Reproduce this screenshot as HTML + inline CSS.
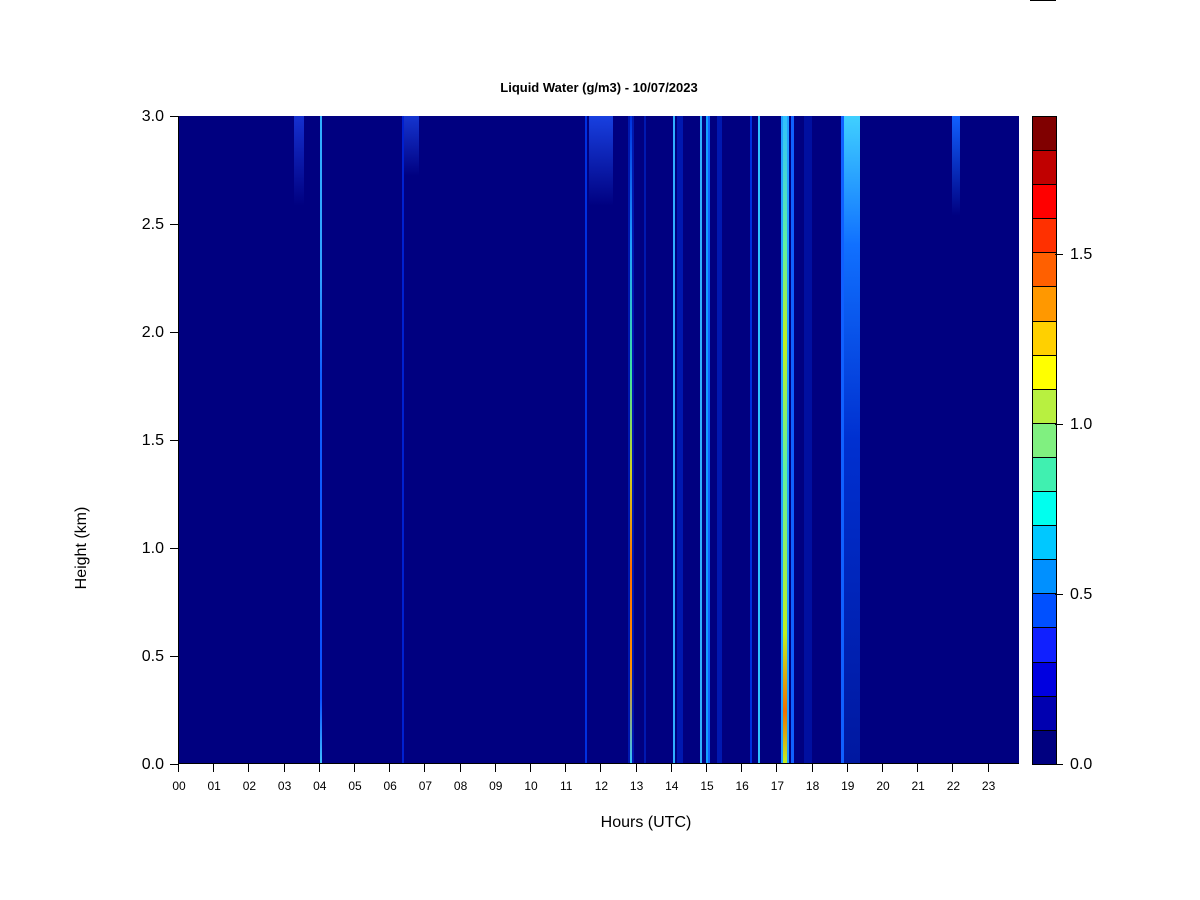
<!DOCTYPE html>
<html><head><meta charset="utf-8"><style>
body{margin:0;width:1200px;height:900px;background:#fff;position:relative;overflow:hidden;font-family:"Liberation Sans",Arial,sans-serif}
.a{position:absolute}
#plot{left:178px;top:116px;width:841px;height:648px;background:#000080;overflow:hidden;border-left:1px solid #000;border-bottom:1px solid #000;box-sizing:border-box}
.s{position:absolute;top:0;height:100%}
.yl{position:absolute;font-size:16px;right:1036px;width:60px;text-align:right}
.xt{position:absolute;top:764px;width:1px;height:8px;background:#000}
.xl{position:absolute;top:779px;font-size:12px;width:30px;text-align:center}
.yt{position:absolute;left:170px;width:8px;height:1px;background:#000}
.cb div{height:34.1px;border-top:1px solid #000;box-sizing:border-box}
.cl{position:absolute;left:1070px;font-size:16px}
.ct{position:absolute;left:1055px;width:8px;height:1px;background:#000}
</style></head><body>
<div class="a" style="left:1030px;top:0;width:26px;height:1px;background:#000"></div>
<div class="a" style="left:0;width:1198px;top:80px;text-align:center;font-size:13px;font-weight:bold">Liquid Water (g/m3) - 10/07/2023</div>
<div id="plot" class="a">
<div class="s" style="left:115px;width:10px;height:90px;background:linear-gradient(#1530d0,#000080)"></div>
<div class="s" style="left:141px;width:2px;background:linear-gradient(#30b0ff,#30a0ff 25%,#1060ff 40%,#0a50ff 90%,#40c0ff)"></div>
<div class="s" style="left:223px;width:2px;background:#0020d0"></div>
<div class="s" style="left:225px;width:15px;height:60px;background:linear-gradient(#1535d0,#000080)"></div>
<div class="s" style="left:406px;width:2px;background:#0030e0"></div>
<div class="s" style="left:410px;width:24px;height:90px;background:linear-gradient(#1840e0,#000080)"></div>
<div class="s" style="left:449px;width:6px;background:#0018b0"></div>
<div class="s" style="left:451px;width:2px;background:linear-gradient(#0030e0,#20a0ff 20%,#40e0a0 40%,#d0d020 55%,#ff7000 70%,#ff9000 85%,#30c0ff)"></div>
<div class="s" style="left:465px;width:2px;background:#0018b0"></div>
<div class="s" style="left:494px;width:2px;background:#30b0ff"></div>
<div class="s" style="left:498px;width:6px;background:#0018b0"></div>
<div class="s" style="left:521px;width:2px;background:#30b0ff"></div>
<div class="s" style="left:527px;width:2px;background:#10a0ff"></div>
<div class="s" style="left:529px;width:2px;background:#1060ff"></div>
<div class="s" style="left:538px;width:5px;background:#0018b0"></div>
<div class="s" style="left:571px;width:2px;background:#0030e0"></div>
<div class="s" style="left:579px;width:2px;background:#30c0ff"></div>
<div class="s" style="left:602px;width:2px;background:#20a0ff"></div>
<div class="s" style="left:604px;width:4px;background:linear-gradient(#30c0ff,#60f0a0 20%,#c0f020 35%,#60f0a0 55%,#c0f020 80%,#f07000 92%,#c0f020)"></div>
<div class="s" style="left:608px;width:2px;background:#20a0ff"></div>
<div class="s" style="left:612px;width:3px;background:#1060ff"></div>
<div class="s" style="left:625px;width:8px;background:#000fa0"></div>
<div class="s" style="left:662px;width:3px;background:#1060ff"></div>
<div class="s" style="left:665px;width:16px;background:linear-gradient(#40d0ff,#1070ff 20%,#0030d0 50%,#0018a0)"></div>
<div class="s" style="left:773px;width:8px;height:100px;background:linear-gradient(#1060ff,#000080)"></div>
</div>
<div class="yt" style="top:764px"></div><div class="yt" style="top:656px"></div><div class="yt" style="top:548px"></div><div class="yt" style="top:440px"></div><div class="yt" style="top:332px"></div><div class="yt" style="top:224px"></div><div class="yt" style="top:116px"></div>
<div class="yl" style="top:756px">0.0</div><div class="yl" style="top:648px">0.5</div><div class="yl" style="top:540px">1.0</div><div class="yl" style="top:432px">1.5</div><div class="yl" style="top:324px">2.0</div><div class="yl" style="top:216px">2.5</div><div class="yl" style="top:108px">3.0</div>
<div class="a" style="left:82px;top:548px;transform:translate(-50%,-50%) rotate(-90deg);font-size:16px;white-space:nowrap">Height (km)</div>
<div class="a" style="left:0;width:1292px;top:814px;text-align:center;font-size:16px">Hours (UTC)</div>
<div id="xticks"></div>
<div class="a cb" style="left:1032px;top:116px;width:23px;height:648px;border:1px solid #000;border-top:0;box-sizing:content-box">
<div style="background:#800000"></div><div style="background:#c00000"></div><div style="background:#ff0000"></div><div style="background:#ff3000"></div><div style="background:#ff6000"></div><div style="background:#ff9800"></div><div style="background:#ffd000"></div><div style="background:#ffff00"></div><div style="background:#b8f040"></div><div style="background:#80f080"></div><div style="background:#40f0b0"></div><div style="background:#00ffee"></div><div style="background:#00c8ff"></div><div style="background:#0090ff"></div><div style="background:#0050ff"></div><div style="background:#1020ff"></div><div style="background:#0000e0"></div><div style="background:#0000b0"></div><div style="background:#000080"></div>
</div>
<div class="ct" style="top:764px"></div><div class="ct" style="top:594px"></div><div class="ct" style="top:424px"></div><div class="ct" style="top:254px"></div>
<div class="cl" style="top:756px">0.0</div><div class="cl" style="top:586px">0.5</div><div class="cl" style="top:416px">1.0</div><div class="cl" style="top:246px">1.5</div>
<script>
var h='';for(var i=0;i<24;i++){var x=178+i*35.2;h+='<div class="xt" style="left:'+x+'px"></div><div class="xl" style="left:'+(x-14)+'px">'+(i<10?'0':'')+i+'</div>';}
document.getElementById('xticks').innerHTML=h;
</script>
</body></html>
